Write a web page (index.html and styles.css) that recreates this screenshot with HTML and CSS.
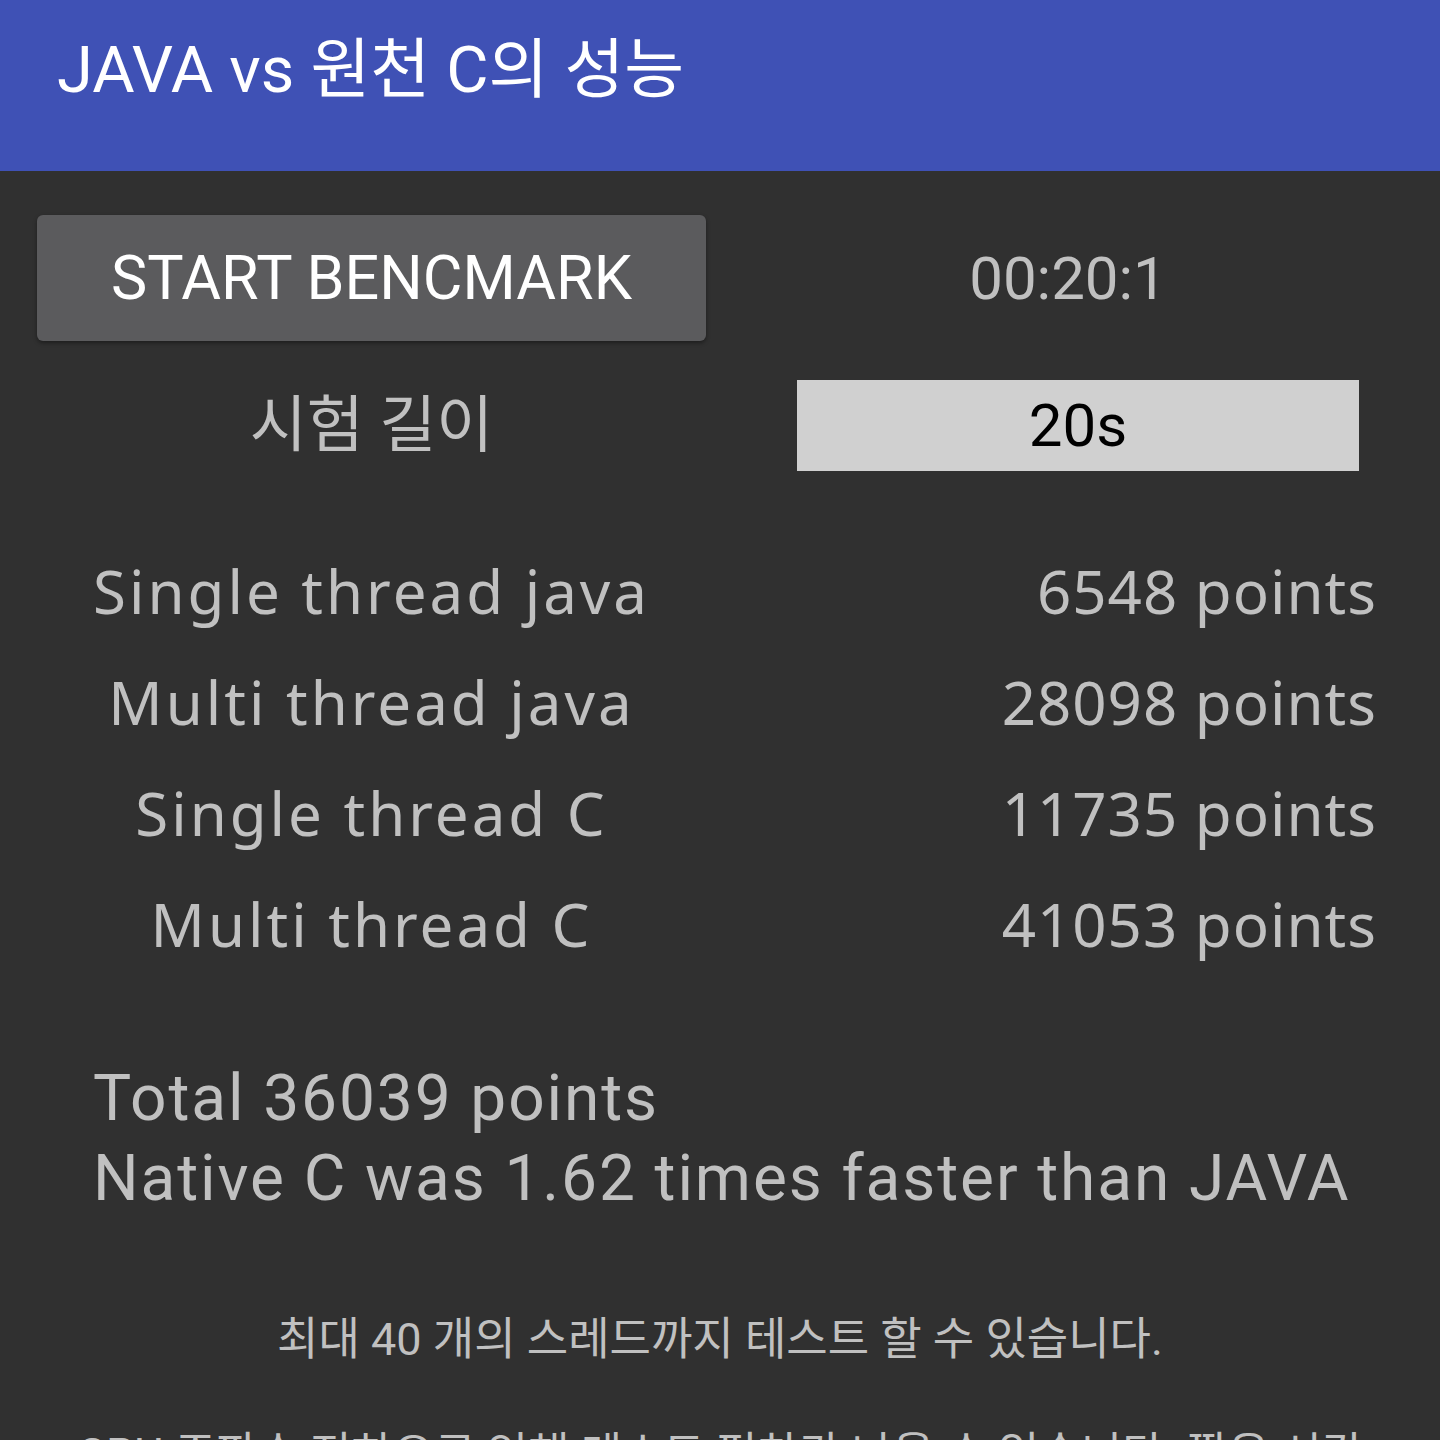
FILE: index.html
```html
<!DOCTYPE html>
<html lang="ko">
    <head>
        <meta charset="UTF-8" />
        <meta name="viewport" content="width=device-width, initial-scale=1.0" />
        <title>JAVA vs 원천 C의 성능</title>
        <link rel="stylesheet" href="styles.css">
    </head>
    <body>
        <header class="appbar">
            <h1>JAVA vs 원천 C의 성능</h1>
        </header>

        <main class="content">
            <div class="controls">
                <button class="start-btn">START BENCMARK</button>
                <div class="timer">00:20:1</div>
                <div class="length-label">시험 길이</div>
                <div class="length-box">20s</div>
            </div>

            <div class="scores">
                <div class="score-name">Single thread java</div>
                <div class="score-value">6548 points</div>
                <div class="score-name">Multi thread java</div>
                <div class="score-value">28098 points</div>
                <div class="score-name">Single thread C</div>
                <div class="score-value">11735 points</div>
                <div class="score-name">Multi thread C</div>
                <div class="score-value">41053 points</div>
            </div>

            <div class="summary">
                <p>Total 36039 points</p>
                <p>Native C was 1.62 times faster than JAVA</p>
            </div>

            <p class="note">최대 40 개의 스레드까지 테스트 할 수 있습니다.</p>
            <p class="note note-wide">CPU 주파수 저하으로 인해 테스트 편차가 나올 수 있습니다. 짧은 시간</p>
        </main>
    </body>
</html>
```

FILE: styles.css
```css
body {
    margin: 0;
    font-family: Roboto, "Noto Sans CJK KR", sans-serif;
    background-color: #303030;
    color: #c0c0c0;
    overflow: hidden;
}

.appbar {
    height: 171px;
    background-color: #3f51b5;
    display: flex;
    align-items: center;
    padding: 0 57px;
    box-sizing: border-box;
}

.appbar h1 {
    margin: 0 0 44px 0;
    font-size: 65px;
    font-weight: 400;
    color: #ffffff;
}

.content {
    padding: 44px 0 0 37px;
}

.controls {
    display: grid;
    grid-template-columns: 669px 91px 562px;
    grid-template-rows: 126px 131px;
    align-items: center;
}

.start-btn {
    grid-column: 1;
    height: 126px;
    border: none;
    border-radius: 6px;
    background-color: #5b5b5d;
    color: #ffffff;
    font-family: Roboto, sans-serif;
    font-size: 61px;
    box-shadow: 0 2px 4px rgba(0, 0, 0, 0.4);
}

.timer {
    grid-column: 3;
    text-align: center;
    font-size: 60px;
    padding-right: 20px;
}

.length-label {
    grid-column: 1;
    margin-top: 38px;
    line-height: 91px;
    text-align: center;
    font-size: 62px;
}

.length-box {
    grid-column: 3;
    height: 91px;
    margin-top: 38px;
    background-color: #d0d0d0;
    color: #000000;
    font-size: 60px;
    display: flex;
    align-items: center;
    justify-content: center;
}

.scores {
    display: grid;
    grid-template-columns: 669px 670px;
    grid-auto-rows: 111px;
    align-items: center;
    margin-top: 63px;
    font-family: "Noto Sans", sans-serif;
    font-size: 60px;
}

.score-name {
    text-align: center;
    letter-spacing: 3px;
}

.score-value {
    text-align: right;
    letter-spacing: 1px;
    margin-right: -1px;
}

.summary {
    margin-top: 80px;
    padding-left: 56px;
    font-size: 64px;
    letter-spacing: 1.9px;
}

.summary p {
    margin: 0;
    line-height: 80px;
}

.note {
    margin: 84px 0 0 -37px;
    text-align: center;
    font-size: 45px;
}

.note-wide {
    margin-top: 50px;
}
```
